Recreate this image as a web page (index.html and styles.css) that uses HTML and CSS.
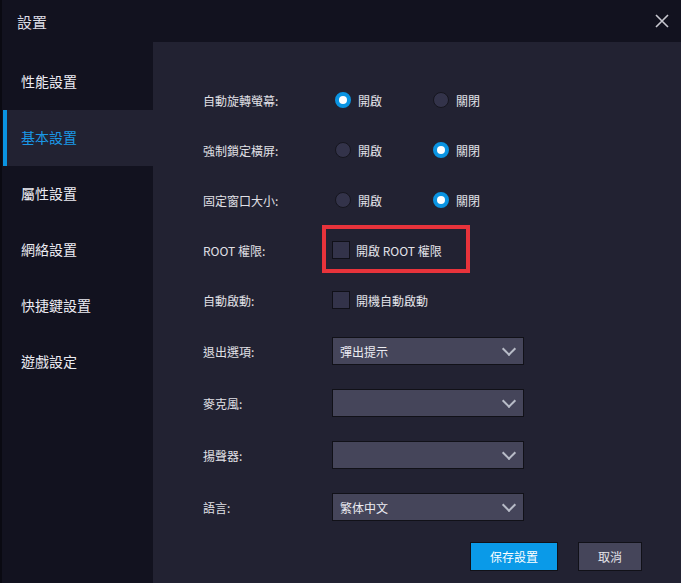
FILE: index.html
```html
<!DOCTYPE html>
<html lang="zh-Hant">
<head>
  <meta charset="UTF-8" />
  <title>設置</title>
  <link rel="stylesheet" href="styles.css">
</head>
<body>
  <div class="window">
    <header class="titlebar">
      <span class="title">設置</span>
      <span class="close">
        <svg width="16" height="16" viewBox="0 0 16 16"><path d="M2 2 L14 14 M14 2 L2 14" stroke="#c8c8d0" stroke-width="1.6" fill="none"/></svg>
      </span>
    </header>

    <div class="main">
      <nav class="sidebar">
        <div class="nav-item">性能設置</div>
        <div class="nav-item active">基本設置</div>
        <div class="nav-item">屬性設置</div>
        <div class="nav-item">網絡設置</div>
        <div class="nav-item">快捷鍵設置</div>
        <div class="nav-item">遊戲設定</div>
      </nav>

      <section class="content">
        <div class="row">
          <div class="label">自動旋轉螢幕:</div>
          <div class="option"><span class="radio checked"></span>開啟</div>
          <div class="option"><span class="radio"></span>關閉</div>
        </div>
        <div class="row">
          <div class="label">強制鎖定橫屏:</div>
          <div class="option"><span class="radio"></span>開啟</div>
          <div class="option"><span class="radio checked"></span>關閉</div>
        </div>
        <div class="row">
          <div class="label">固定窗口大小:</div>
          <div class="option"><span class="radio"></span>開啟</div>
          <div class="option"><span class="radio checked"></span>關閉</div>
        </div>
        <div class="row">
          <div class="label">ROOT 權限:</div>
          <div class="check-wrap">
            <span class="checkbox"></span>開啟 ROOT 權限
            <span class="highlight"></span>
          </div>
        </div>
        <div class="row">
          <div class="label">自動啟動:</div>
          <div class="check-wrap"><span class="checkbox"></span>開機自動啟動</div>
        </div>
        <div class="row tall">
          <div class="label">退出選項:</div>
          <div class="select">彈出提示<span class="arrow"></span></div>
        </div>
        <div class="row tall">
          <div class="label">麥克風:</div>
          <div class="select"><span class="arrow"></span></div>
        </div>
        <div class="row tall">
          <div class="label">揚聲器:</div>
          <div class="select"><span class="arrow"></span></div>
        </div>
        <div class="row tall">
          <div class="label">語言:</div>
          <div class="select">繁体中文<span class="arrow"></span></div>
        </div>

        <div class="actions">
          <button class="btn primary">保存設置</button>
          <button class="btn">取消</button>
        </div>
      </section>
    </div>
  </div>
</body>
</html>
```

FILE: styles.css
```css
* {
  box-sizing: border-box;
}

body {
  margin: 0;
  padding: 0;
  background: #0a0a12;
  font-family: "Noto Sans CJK TC", "Noto Sans", sans-serif;
  color: #e4e4ea;
}

.window {
  width: 679px;
  height: 583px;
  margin-left: 2px;
  background: #12121f;
  display: flex;
  flex-direction: column;
  overflow: hidden;
}

.titlebar {
  height: 42px;
  flex-shrink: 0;
  display: flex;
  align-items: center;
  justify-content: space-between;
  padding: 0 11px 0 15px;
}

.title {
  font-size: 15px;
  color: #dcdce4;
}

.close {
  display: flex;
}

.main {
  flex: 1;
  display: flex;
}

.sidebar {
  width: 151px;
  flex-shrink: 0;
  padding-top: 12px;
}

.nav-item {
  height: 56px;
  display: flex;
  align-items: center;
  padding: 0 0 3px 14px;
  font-size: 14px;
  color: #ececf2;
  border-left: 4px solid transparent;
  margin-left: 1px;
}

.nav-item.active {
  background: #222232;
  border-left-color: #0a94e2;
  color: #1a98e6;
}

.content {
  flex: 1;
  background: #222232;
  padding: 33px 0 0 50px;
}

.row {
  height: 50px;
  display: flex;
  align-items: center;
  font-size: 12px;
}

.row.tall {
  height: 52px;
}

.label {
  width: 129px;
  flex-shrink: 0;
  color: #e0e0e6;
}

.option {
  width: 98px;
  display: flex;
  align-items: center;
  padding-left: 3px;
}

.radio {
  width: 16px;
  height: 16px;
  border-radius: 50%;
  background: #33334a;
  border: 1px solid #16161f;
  margin-right: 7px;
  flex-shrink: 0;
}

.radio.checked {
  background: #0a94e2;
  border: 4px solid #0a94e2;
  position: relative;
}

.radio.checked::after {
  content: "";
  position: absolute;
  left: 0;
  top: 0;
  width: 8px;
  height: 8px;
  border-radius: 50%;
  background: #fff;
}

.check-wrap {
  position: relative;
  display: flex;
  align-items: center;
}

.checkbox {
  width: 18px;
  height: 18px;
  background: #33334a;
  border: 1px solid #101018;
  margin-right: 6px;
}

.highlight {
  position: absolute;
  left: -10px;
  top: -16px;
  width: 148px;
  height: 48px;
  border: 4px solid #e8333b;
}

.select {
  width: 192px;
  height: 28px;
  background: #45455a;
  border: 1px solid #111118;
  display: flex;
  align-items: center;
  padding-left: 7px;
  position: relative;
  color: #ececf2;
}

.arrow {
  position: absolute;
  right: 9px;
  top: 6px;
  width: 10px;
  height: 10px;
  border-right: 2px solid #b8bcc8;
  border-bottom: 2px solid #b8bcc8;
  transform: rotate(45deg);
}

.actions {
  display: flex;
  justify-content: flex-end;
  gap: 20px;
  margin-top: 9px;
  padding-right: 39px;
}

.btn {
  height: 29px;
  width: 64px;
  font-family: inherit;
  font-size: 12px;
  color: #e4e4ea;
  background: #45455a;
  border: 1px solid #111118;
  cursor: pointer;
}

.btn.primary {
  width: 88px;
  background: #0a9ae8;
  color: #fff;
}
```
